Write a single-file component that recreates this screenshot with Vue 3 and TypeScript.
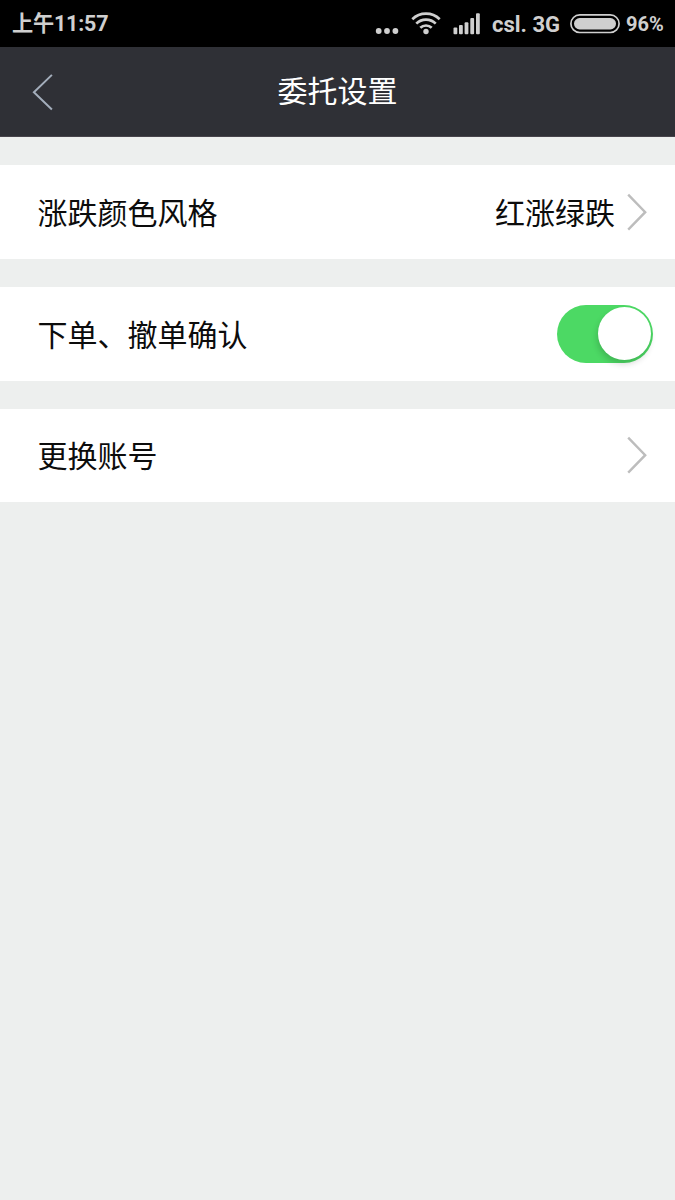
<script setup lang="ts">
import { ref } from 'vue'

interface SettingRow {
  label: string
  kind: 'link' | 'switch'
  value?: string
}

const rows: SettingRow[] = [
  { label: '涨跌颜色风格', kind: 'link', value: '红涨绿跌' },
  { label: '下单、撤单确认', kind: 'switch' },
  { label: '更换账号', kind: 'link' },
]

const confirmOrders = ref(true)
</script>

<template>
  <div class="screen">
    <div class="status">
      <span class="time"><span class="cjk">上午</span>11:57</span>
      <div class="indicators">
        <svg class="dots" width="24" height="8" viewBox="0 0 24 8">
          <circle cx="3.7" cy="4" r="2.9" />
          <circle cx="12" cy="4" r="2.9" />
          <circle cx="20.4" cy="4" r="2.9" />
        </svg>
        <svg class="wifi" width="30" height="24" viewBox="0 0 30 24">
          <g fill="none" stroke="#cfcfcf" stroke-width="2.7">
            <path d="M1.3 7.3A19.6 19.6 0 0 1 28.7 7.3" />
            <path d="M5.3 11.6A13.8 13.8 0 0 1 24.7 11.6" />
            <path d="M9.3 15.8A8.2 8.2 0 0 1 20.7 15.8" />
          </g>
          <circle cx="15" cy="19.5" r="2.7" />
        </svg>
        <svg class="signal" width="28" height="22" viewBox="0 0 28 22">
          <rect x="0.5" y="14.5" width="3.8" height="6.7" rx="1" />
          <rect x="6" y="12" width="3.8" height="9.2" rx="1" />
          <rect x="11.6" y="9.3" width="3.8" height="11.9" rx="1" />
          <rect x="17.3" y="5" width="3.8" height="16.2" rx="1" />
          <rect x="23" y="0.3" width="3.8" height="20.9" rx="1" />
        </svg>
        <span class="carrier">csl. 3G</span>
        <svg class="battery" width="50" height="20" viewBox="0 0 50 20">
          <rect x="0.9" y="0.9" width="48.2" height="17.6" rx="8.8" fill="none" stroke="#cfcfcf" stroke-width="1.7" />
          <rect x="4" y="4" width="42" height="11.4" rx="5.7" />
        </svg>
        <span class="percent">96%</span>
      </div>
    </div>

    <header class="bar">
      <svg class="back" width="24" height="40" viewBox="0 0 24 40">
        <path d="M21.9 2.9L3.9 20.3L21.9 37.5" />
      </svg>
      <h1 class="title">委托设置</h1>
    </header>

    <main class="list">
      <div v-for="row in rows" :key="row.label" class="row">
        <span class="label">{{ row.label }}</span>
        <template v-if="row.kind === 'link'">
          <span v-if="row.value" class="value">{{ row.value }}</span>
          <svg class="chevron" width="20" height="38" viewBox="0 0 20 38">
            <path d="M1.2 1.6L18.2 19.2L1.2 36.7" />
          </svg>
        </template>
        <button
          v-else
          class="switch"
          :class="{ on: confirmOrders }"
          role="switch"
          :aria-checked="confirmOrders"
          @click="confirmOrders = !confirmOrders"
        >
          <span class="knob"></span>
        </button>
      </div>
    </main>
  </div>
</template>

<style>
body {
  margin: 0;
  background: #edefee;
}
</style>

<style scoped>
.screen {
  width: 675px;
  height: 1200px;
  overflow: hidden;
  background: #edefee;
  font-family: Roboto, 'Noto Sans CJK SC', sans-serif;
}

.status {
  display: flex;
  align-items: center;
  justify-content: space-between;
  box-sizing: border-box;
  height: 47px;
  padding: 0 12px;
  background: #000;
  color: #cfcfcf;
  font-size: 22px;
  font-weight: 700;
  line-height: 46px;
  white-space: nowrap;
}

.status svg {
  fill: #cfcfcf;
  flex: none;
}

.time {
  font-size: 21.5px;
  letter-spacing: -0.2px;
}

.cjk {
  font-size: 21.2px;
  font-weight: 700;
}

.indicators {
  display: flex;
  align-items: center;
}

.dots {
  margin: 14px 12px 0 0;
}

.wifi {
  margin-right: 12px;
}

.signal {
  margin-right: 11px;
}

.carrier {
  width: 67px;
  margin-right: 11px;
  padding-top: 2px;
}

.battery {
  margin-right: 6px;
}

.percent {
  width: 37px;
  padding-top: 1px;
  font-size: 20px;
}

.bar {
  display: grid;
  grid-template-columns: 60px 1fr 60px;
  align-items: center;
  box-sizing: border-box;
  height: 90px;
  border-bottom: 1px solid #47444b;
  background: #2f3036;
}

.back {
  margin: 1px 0 0 30px;
  fill: none;
  stroke: #a3adbb;
  stroke-width: 2;
}

.title {
  margin: 0;
  color: #fff;
  font-size: 30px;
  font-weight: 400;
  line-height: 44px;
  text-align: center;
}

.list {
  display: flex;
  flex-direction: column;
  gap: 28px;
  padding-top: 28px;
}

.row {
  display: flex;
  align-items: center;
  box-sizing: border-box;
  height: 93.8px;
  padding: 0 28px 0 37.5px;
  background: #fff;
  color: #0c0c0c;
  font-size: 30px;
  line-height: 44px;
}

.label {
  flex: 1;
  padding-top: 4px;
}

.value {
  margin-right: 12px;
  padding-top: 4px;
}

.chevron {
  fill: none;
  stroke: #bdbdbd;
  stroke-width: 2.4;
}

.switch {
  display: flex;
  align-items: center;
  box-sizing: border-box;
  width: 96px;
  height: 58px;
  margin-right: -6px;
  padding: 0 2px;
  border: 0;
  border-radius: 29px;
  background: #dcdcdc;
}

.switch.on {
  justify-content: flex-end;
  background: #4cd964;
}

.knob {
  width: 53px;
  height: 53px;
  border-radius: 50%;
  background: #fff;
  box-shadow: -1px 4px 6px rgba(0, 0, 0, 0.16);
}
</style>
